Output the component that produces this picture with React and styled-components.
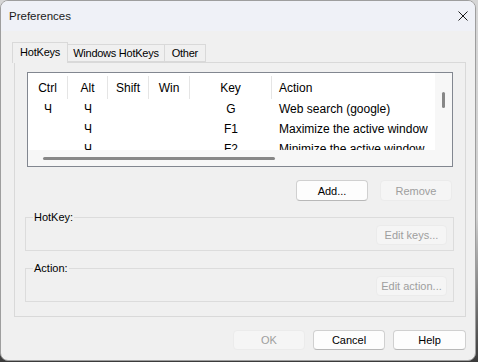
import React from "react";
import styled, { createGlobalStyle } from "styled-components";

const GlobalStyle = createGlobalStyle`
  html, body {
    margin: 0;
    padding: 0;
  }
  body {
    width: 478px;
    height: 362px;
    overflow: hidden;
    background: linear-gradient(to bottom, #d6d6d6 0%, #cfcfcf 60%, #3a3a3a 100%);
    font-family: "Liberation Sans", Arial, sans-serif;
  }
`;

//the dialog frame
const Window = styled.div`
  box-sizing: border-box;
  width: 476px;
  height: 361px;
  background: #f0f0f0;
  border: 1px solid #9e9e9e;
  border-radius: 8px;
  overflow: hidden;
  display: flex;
  flex-direction: column;
`;

const TitleBar = styled.div`
  height: 30px;
  flex: none;
  background: #eff1f7;
  display: flex;
  align-items: center;
  justify-content: space-between;
  padding: 0 7px 0 8px;
`;

const Title = styled.span`
  font-size: 11.5px;
  color: #1a1a1a;
`;

const CloseBtn = styled.div`
  width: 10px;
  height: 10px;
  display: flex;
`;

const Body = styled.div`
  flex: 1;
  display: flex;
  flex-direction: column;
  padding: 11px 9px 0 11px;
`;

const TabStrip = styled.div`
  display: flex;
  align-items: flex-end;
  height: 20px;
  position: relative;
  z-index: 1;
`;

const Tab = styled.div`
  box-sizing: border-box;
  height: ${(p) => (p.$active ? "21px" : "18px")};
  padding: ${(p) => (p.$active ? "3px 7px 0 7px" : `2px ${p.$pad || 5}px 0 ${p.$pad || 5}px`)};
  margin-left: ${(p) => (p.$first ? "0" : "-1px")};
  margin-bottom: ${(p) => (p.$active ? "-1px" : "0")};
  border: 1px solid #d9d9d9;
  border-bottom: ${(p) => (p.$active ? "none" : "1px solid #d9d9d9")};
  background: #f0f0f0;
  font-size: 11px;
  letter-spacing: ${(p) => (p.$active ? "-0.2px" : "-0.25px")};
  color: #000;
  white-space: nowrap;
`;

const Panel = styled.div`
  box-sizing: border-box;
  margin-left: 2px;
  width: 452px;
  height: 255px;
  border: 1px solid #d9d9d9;
  background: #f0f0f0;
  padding: 9px 12px 0 12px;
  display: flex;
  flex-direction: column;
`;

//list view
const ListBox = styled.div`
  box-sizing: border-box;
  width: 426px;
  height: 95px;
  border: 1px solid #828790;
  background: #f7f7f7;
  display: grid;
  grid-template-columns: 1fr 17px;
  grid-template-rows: 1fr 16px;
  font-size: 12px;
`;

const ListContent = styled.div`
  background: #fff;
  overflow: hidden;
`;

const Row = styled.div`
  display: flex;
  height: ${(p) => (p.$header ? "26px" : "20px")};
  align-items: center;
  width: 600px;
`;

const Cell = styled.div`
  box-sizing: border-box;
  width: ${(p) => p.$w}px;
  flex: none;
  text-align: ${(p) => (p.$left ? "left" : "center")};
  padding-left: ${(p) => (p.$left ? "7px" : "0")};
  color: #000;
  white-space: nowrap;
  height: ${(p) => (p.$header ? "23px" : "auto")};
  line-height: ${(p) => (p.$header ? "24px" : "normal")};
  margin-top: ${(p) => (p.$header ? "2px" : "0")};
  border-right: ${(p) => (p.$header && !p.$left ? "1px solid #e5e5e5" : "none")};
`;

const VTrack = styled.div`
  display: flex;
  justify-content: center;
  padding-top: 19px;
`;

const VThumb = styled.div`
  width: 3px;
  height: 16px;
  border-radius: 2px;
  background: #878787;
`;

const HTrack = styled.div`
  display: flex;
  align-items: center;
  padding-left: 15px;
`;

const HThumb = styled.div`
  width: 232px;
  height: 3px;
  border-radius: 2px;
  background: #878787;
  margin-top: 1px;
`;

const Corner = styled.div``;

const ButtonRow = styled.div`
  display: flex;
  justify-content: flex-end;
  gap: 12px;
  margin-top: 13px;
  padding-right: 1px;
`;

const Button = styled.button`
  box-sizing: border-box;
  width: ${(p) => p.$w || 72}px;
  height: ${(p) => p.$h || 21}px;
  padding: 0;
  border-radius: 4px;
  font-family: "Liberation Sans", Arial, sans-serif;
  font-size: 11px;
  color: ${(p) => (p.disabled ? "#9e9e9e" : "#000")};
  background: ${(p) => (p.disabled ? "#f5f5f5" : "#fdfdfd")};
  border: 1px solid ${(p) => (p.disabled ? "#ebebeb" : "#d0d0d0")};
  border-bottom-color: ${(p) => (p.disabled ? "#ebebeb" : "#b8b8b8")};
`;

//group boxes
const Group = styled.fieldset`
  box-sizing: border-box;
  margin: ${(p) => p.$top}px -1px 0 -2px;
  height: ${(p) => p.$h}px;
  border: 1px solid #dcdcdc;
  padding: 0 6px 0 0;
  display: flex;
  justify-content: flex-end;
  align-items: flex-start;
  min-width: 0;
`;

const Legend = styled.legend`
  font-size: 11px;
  color: #000;
  padding: 0 1px;
  margin-left: 7px;
`;

const GroupInner = styled.div`
  width: 100%;
  display: flex;
  justify-content: flex-end;
  padding-top: 2px;
`;

const Footer = styled.div`
  display: flex;
  justify-content: flex-end;
  gap: 8px;
  margin-top: 13px;
`;

const columns = [
  { label: "Ctrl", w: 40 },
  { label: "Alt", w: 40 },
  { label: "Shift", w: 41 },
  { label: "Win", w: 41 },
  { label: "Key", w: 82 },
];

const rows = [
  ["Ч", "Ч", "", "", "G", "Web search (google)"],
  ["", "Ч", "", "", "F1", "Maximize the active window"],
  ["", "Ч", "", "", "F2", "Minimize the active window"],
];

export default function App() {
  return (
    <>
      <GlobalStyle />
      <Window>
        <TitleBar>
          <Title>Preferences</Title>
          <CloseBtn>
            <svg width="10" height="10" viewBox="0 0 10 10">
              <path d="M0.5 0.5 L9.5 9.5 M9.5 0.5 L0.5 9.5" stroke="#1b1b1b" strokeWidth="1" />
            </svg>
          </CloseBtn>
        </TitleBar>
        <Body>
          <TabStrip>
            <Tab $active $first>HotKeys</Tab>
            <Tab>Windows HotKeys</Tab>
            <Tab $pad={7}>Other</Tab>
          </TabStrip>
          <Panel>
            <ListBox>
              <ListContent>
                <Row $header>
                  {columns.map((c) => (
                    <Cell key={c.label} $w={c.w} $header>
                      {c.label}
                    </Cell>
                  ))}
                  <Cell $w={300} $left $header>
                    Action
                  </Cell>
                </Row>
                {rows.map((r, i) => (
                  <Row key={i}>
                    {columns.map((c, j) => (
                      <Cell key={c.label} $w={c.w}>
                        {r[j]}
                      </Cell>
                    ))}
                    <Cell $w={300} $left>
                      {r[5]}
                    </Cell>
                  </Row>
                ))}
              </ListContent>
              <VTrack>
                <VThumb />
              </VTrack>
              <HTrack>
                <HThumb />
              </HTrack>
              <Corner />
            </ListBox>
            <ButtonRow>
              <Button>Add...</Button>
              <Button disabled>Remove</Button>
            </ButtonRow>
            <Group $top={10} $h={40}>
              <Legend>HotKey:</Legend>
              <GroupInner>
                <Button disabled $w={71} $h={20}>Edit keys...</Button>
              </GroupInner>
            </Group>
            <Group $top={11} $h={40}>
              <Legend>Action:</Legend>
              <GroupInner>
                <Button disabled $w={71} $h={20}>Edit action...</Button>
              </GroupInner>
            </Group>
          </Panel>
          <Footer>
            <Button disabled $w={72} $h={20}>OK</Button>
            <Button $w={72} $h={20}>Cancel</Button>
            <Button $w={73} $h={20}>Help</Button>
          </Footer>
        </Body>
      </Window>
    </>
  );
}
